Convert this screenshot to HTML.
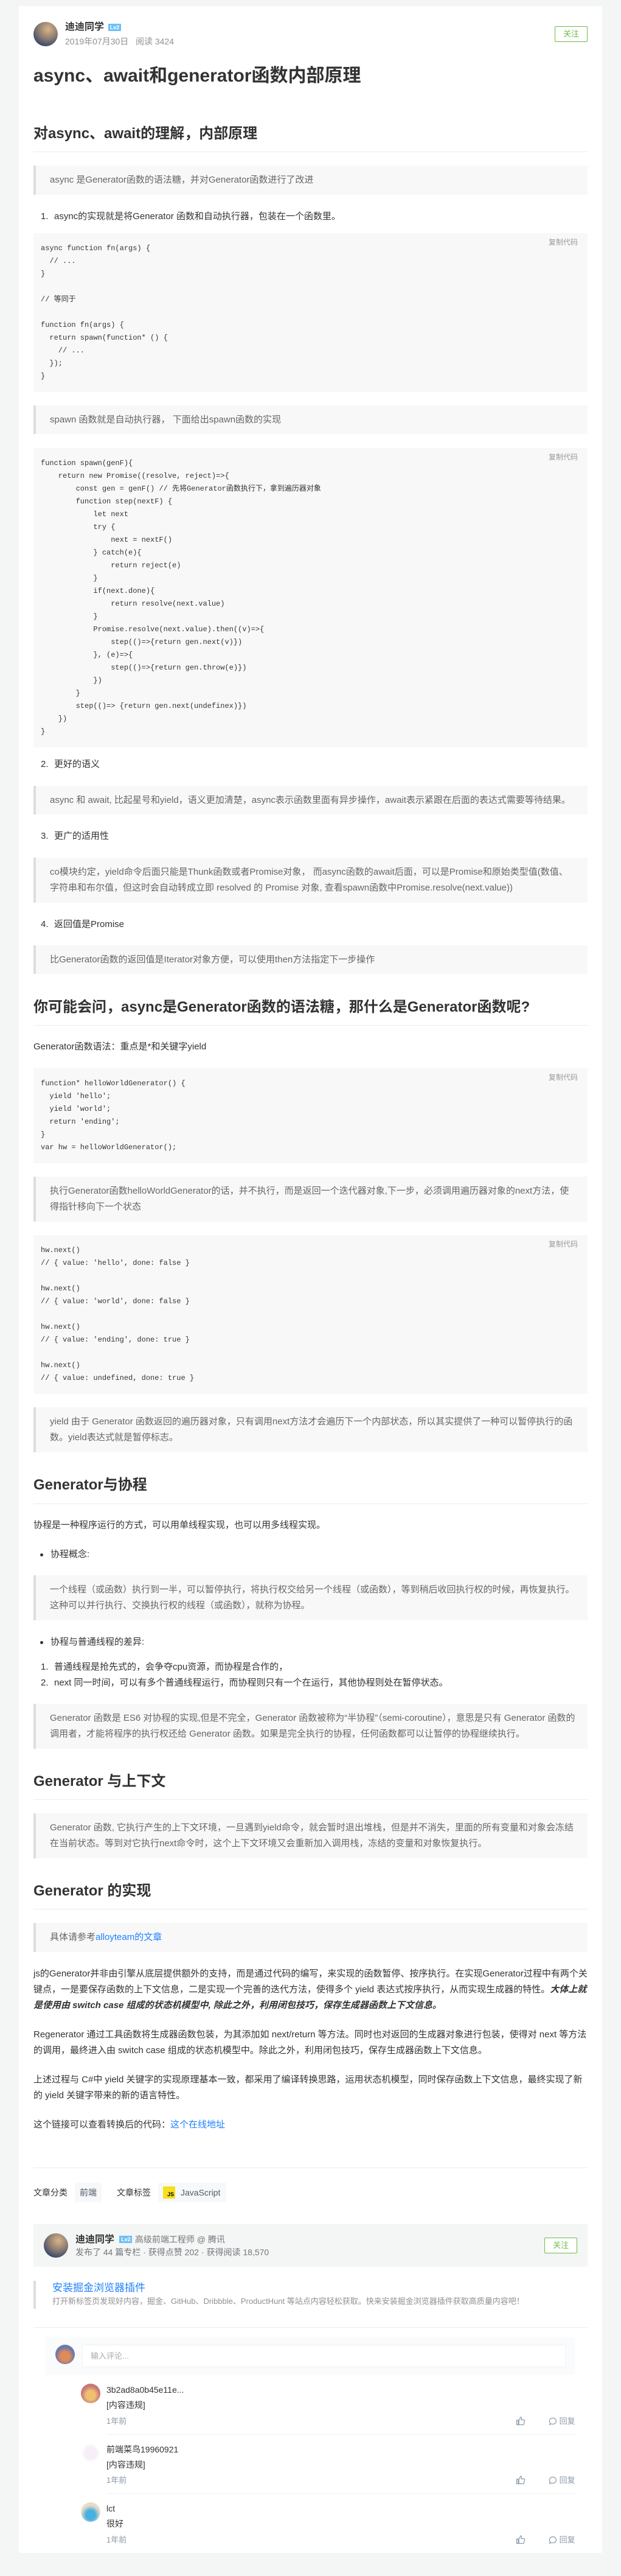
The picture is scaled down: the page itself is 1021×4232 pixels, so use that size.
<!DOCTYPE html>
<html><head><meta charset="utf-8"><style>
*{margin:0;padding:0;box-sizing:border-box}
body{width:1021px;height:4232px;background:#f4f5f5;position:relative;font-family:"Liberation Sans","Noto Sans CJK SC",sans-serif;color:#333;overflow:hidden}
.card{position:absolute;left:31px;top:10px;width:959px;height:4184px;background:#fff;border-radius:2px}
.a{position:absolute;left:55px;width:911px}
.p{font-size:15px;line-height:26px;color:#333}
.bq{background:#f8f8f8;border-left:4px solid #ddd;padding:11px 20px 11px 23px;font-size:15px;line-height:26px;color:#666}
.code{background:#f8f8f8;padding:15px 12px;font-family:"Liberation Mono","Noto Sans CJK SC",monospace;font-size:12px;line-height:21px;color:#333;white-space:pre}
.copy{position:absolute;right:16px;top:5px;font-size:12px;color:#999;font-family:"Liberation Sans","Noto Sans CJK SC",sans-serif}
.h2{font-size:24px;font-weight:bold;line-height:34px;color:#333}
.hr{height:1px;background:#ececec}
.li{font-size:15px;line-height:26px;color:#333}
.li span{display:inline-block;width:22px;margin-left:12px}
.bul{font-size:15px;line-height:26px}
.bul:before{content:"";position:absolute;left:11px;top:11px;width:5px;height:5px;border-radius:50%;background:#333}
.bul{padding-left:28px}
a{color:#1e80ff;text-decoration:none}
.tag{position:absolute;background:#f7f8fa;border-radius:2px;font-size:15px;line-height:32px;color:#4e5969;height:32px}
.cm .av{position:absolute;left:133px;width:32px;height:32px;border-radius:50%}
.nm{position:absolute;left:175px;font-size:14px;color:#333;line-height:20px}
.tm{position:absolute;left:175px;font-size:13px;color:#8a9aa9;line-height:20px}
.act{position:absolute;font-size:13px;color:#8a9aa9;line-height:20px}
.act svg{vertical-align:-3px}
</style></head><body>
<div class="card"></div>

<div style="position:absolute;left:55px;top:36px;width:40px;height:40px;border-radius:50%;background:radial-gradient(circle at 60% 30%,#d9b58a,#8a7a70 45%,#3c4d6b 75%,#5a3a4a)"></div>
<div style="position:absolute;left:107px;top:35px;font-size:16px;font-weight:bold;color:#333;line-height:20px">迪迪同学</div>
<div style="position:absolute;left:178px;top:39px;width:21px;height:12px;background:#6cc0f5;color:#fff;font-size:9px;font-weight:bold;line-height:12px;text-align:center;border-radius:1px">Lv2</div>
<div style="position:absolute;left:107px;top:59px;font-size:14px;color:#909090;line-height:18px">2019年07月30日 &nbsp; 阅读 3424</div>
<div style="position:absolute;left:912px;top:43px;width:54px;height:26px;border:1px solid #6cbd45;color:#6cbd45;font-size:13px;line-height:24px;text-align:center;border-radius:2px">关注</div>

<div class="a" style="top:106px;font-size:30px;font-weight:bold;line-height:38px;color:#333">async、await和generator函数内部原理</div>

<div class="a h2" style="top:203px">对async、await的理解，内部原理</div>
<div class="a hr" style="top:249px"></div>
<div class="a bq" style="top:272px;height:48px">async 是Generator函数的语法糖，并对Generator函数进行了改进</div>
<div class="a li" style="top:343px"><span>1.</span>async的实现就是将Generator 函数和自动执行器，包装在一个函数里。</div>
<div class="a code" style="top:383px;height:261px"><div class="copy">复制代码</div>async function fn(args) {
  // ...
}

// 等同于

function fn(args) {
  return spawn(function* () {
    // ...
  });
}</div>
<div class="a bq" style="top:666px;height:47px">spawn 函数就是自动执行器， 下面给出spawn函数的实现</div>
<div class="a code" style="top:736px;height:492px"><div class="copy">复制代码</div>function spawn(genF){
    return new Promise((resolve, reject)=>{
        const gen = genF() // 先将Generator函数执行下，拿到遍历器对象
        function step(nextF) {
            let next
            try {
                next = nextF()
            } catch(e){
                return reject(e)
            }
            if(next.done){
                return resolve(next.value)
            }
            Promise.resolve(next.value).then((v)=>{
                step(()=>{return gen.next(v)})
            }, (e)=>{
                step(()=>{return gen.throw(e)})
            })
        }
        step(()=> {return gen.next(undefinex)})
    })
}</div>
<div class="a li" style="top:1243px"><span>2.</span>更好的语义</div>
<div class="a bq" style="top:1291px;height:47px">async 和 await, 比起星号和yield，语义更加清楚，async表示函数里面有异步操作，await表示紧跟在后面的表达式需要等待结果。</div>
<div class="a li" style="top:1361px"><span>3.</span>更广的适用性</div>
<div class="a bq" style="top:1409px;height:74px">co模块约定，yield命令后面只能是Thunk函数或者Promise对象， 而async函数的await后面，可以是Promise和原始类型值(数值、字符串和布尔值，但这时会自动转成立即 resolved 的 Promise 对象, 查看spawn函数中Promise.resolve(next.value))</div>
<div class="a li" style="top:1506px"><span>4.</span>返回值是Promise</div>
<div class="a bq" style="top:1553px;height:47px">比Generator函数的返回值是Iterator对象方便，可以使用then方法指定下一步操作</div>

<div class="a h2" style="top:1638px">你可能会问，async是Generator函数的语法糖，那什么是Generator函数呢?</div>
<div class="a hr" style="top:1684px"></div>
<div class="a p" style="top:1707px">Generator函数语法：重点是*和关键字yield</div>
<div class="a code" style="top:1755px;height:156px"><div class="copy">复制代码</div>function* helloWorldGenerator() {
  yield 'hello';
  yield 'world';
  return 'ending';
}
var hw = helloWorldGenerator();</div>
<div class="a bq" style="top:1933px;height:74px">执行Generator函数helloWorldGenerator的话，并不执行，而是返回一个迭代器对象,下一步，必须调用遍历器对象的next方法，使得指针移向下一个状态</div>
<div class="a code" style="top:2029px;height:261px"><div class="copy">复制代码</div>hw.next()
// { value: 'hello', done: false }

hw.next()
// { value: 'world', done: false }

hw.next()
// { value: 'ending', done: true }

hw.next()
// { value: undefined, done: true }</div>
<div class="a bq" style="top:2312px;height:74px">yield 由于 Generator 函数返回的遍历器对象，只有调用next方法才会遍历下一个内部状态，所以其实提供了一种可以暂停执行的函数。yield表达式就是暂停标志。</div>

<div class="a h2" style="top:2423px">Generator与协程</div>
<div class="a hr" style="top:2470px"></div>
<div class="a p" style="top:2493px">协程是一种程序运行的方式，可以用单线程实现，也可以用多线程实现。</div>
<div class="a bul" style="top:2541px">协程概念:</div>
<div class="a bq" style="top:2588px;height:74px">一个线程（或函数）执行到一半，可以暂停执行，将执行权交给另一个线程（或函数），等到稍后收回执行权的时候，再恢复执行。这种可以并行执行、交换执行权的线程（或函数），就称为协程。</div>
<div class="a bul" style="top:2685px">协程与普通线程的差异:</div>
<div class="a li" style="top:2726px"><span>1.</span>普通线程是抢先式的，会争夺cpu资源，而协程是合作的，</div>
<div class="a li" style="top:2752px"><span>2.</span>next 同一时间，可以有多个普通线程运行，而协程则只有一个在运行，其他协程则处在暂停状态。</div>
<div class="a bq" style="top:2799px;height:74px">Generator 函数是 ES6 对协程的实现,但是不完全，Generator 函数被称为“半协程”（semi-coroutine），意思是只有 Generator 函数的调用者，才能将程序的执行权还给 Generator 函数。如果是完全执行的协程，任何函数都可以让暂停的协程继续执行。</div>

<div class="a h2" style="top:2910px">Generator 与上下文</div>
<div class="a hr" style="top:2956px"></div>
<div class="a bq" style="top:2979px;height:74px">Generator 函数, 它执行产生的上下文环境，一旦遇到yield命令，就会暂时退出堆栈，但是并不消失，里面的所有变量和对象会冻结在当前状态。等到对它执行next命令时，这个上下文环境又会重新加入调用栈，冻结的变量和对象恢复执行。</div>

<div class="a h2" style="top:3090px">Generator 的实现</div>
<div class="a hr" style="top:3136px"></div>
<div class="a bq" style="top:3159px;height:48px">具体请参考<a>alloyteam的文章</a></div>
<div class="a p" style="top:3230px">js的Generator并非由引擎从底层提供额外的支持，而是通过代码的编写，来实现的函数暂停、按序执行。在实现Generator过程中有两个关键点，一是要保存函数的上下文信息，二是实现一个完善的迭代方法，使得多个 yield 表达式按序执行，从而实现生成器的特性。<b><i>大体上就是使用由 switch case 组成的状态机模型中, 除此之外，利用闭包技巧，保存生成器函数上下文信息。</i></b></div>
<div class="a p" style="top:3330px">Regenerator 通过工具函数将生成器函数包装，为其添加如 next/return 等方法。同时也对返回的生成器对象进行包装，使得对 next 等方法的调用，最终进入由 switch case 组成的状态机模型中。除此之外，利用闭包技巧，保存生成器函数上下文信息。</div>
<div class="a p" style="top:3404px">上述过程与 C#中 yield 关键字的实现原理基本一致，都采用了编译转换思路，运用状态机模型，同时保存函数上下文信息，最终实现了新的 yield 关键字带来的新的语言特性。</div>
<div class="a p" style="top:3478px">这个链接可以查看转换后的代码：<a>这个在线地址</a></div>

<div class="a hr" style="top:3561px"></div>
<div style="position:absolute;left:55px;top:3592px;font-size:14px;line-height:20px;color:#333">文章分类</div>
<div class="tag" style="left:123px;top:3586px;width:44px;text-align:center;font-size:14px">前端</div>
<div style="position:absolute;left:192px;top:3592px;font-size:14px;line-height:20px;color:#333">文章标签</div>
<div class="tag" style="left:260px;top:3586px;width:112px;font-size:14px"><span style="position:absolute;left:8px;top:6px;width:20px;height:20px;background:#f7df1e;color:#000;font-size:9px;font-weight:bold;line-height:26px;text-align:right;padding-right:2px">JS</span><span style="position:absolute;left:37px">JavaScript</span></div>

<div class="a" style="top:3654px;height:70px;background:#f4f5f5"></div>
<div style="position:absolute;left:72px;top:3669px;width:40px;height:40px;border-radius:50%;background:radial-gradient(circle at 60% 30%,#d9b58a,#8a7a70 45%,#3c4d6b 75%,#5a3a4a)"></div>
<div style="position:absolute;left:124px;top:3668px;font-size:16px;font-weight:bold;line-height:22px;color:#333">迪迪同学 <span style="display:inline-block;width:21px;height:12px;background:#6cc0f5;color:#fff;font-size:9px;line-height:12px;text-align:center;vertical-align:2px;margin-left:4px">Lv2</span> <span style="font-size:14px;font-weight:normal;color:#72777b">高级前端工程师 @ 腾讯</span></div>
<div style="position:absolute;left:124px;top:3691px;font-size:14px;line-height:18px;color:#72777b">发布了 44 篇专栏 · 获得点赞 202 · 获得阅读 18,570</div>
<div style="position:absolute;left:895px;top:3676px;width:54px;height:26px;border:1px solid #6cbd45;color:#6cbd45;font-size:13px;line-height:24px;text-align:center;border-radius:2px;background:#fff">关注</div>

<div class="a" style="top:3747px;height:46px;border-left:4px solid #ddd;padding-left:27px">
<div style="font-size:17px;line-height:24px;color:#1e80ff">安装掘金浏览器插件</div>
<div style="font-size:13px;line-height:20px;color:#909090">打开新标签页发现好内容，掘金、GitHub、Dribbble、ProductHunt 等站点内容轻松获取。快来安装掘金浏览器插件获取高质量内容吧！</div>
</div>
<div class="a hr" style="top:3823px"></div>

<div style="position:absolute;left:75px;top:3840px;width:871px;height:61px;background:#fafbfc"></div>
<div style="position:absolute;left:91px;top:3852px;width:32px;height:32px;border-radius:50%;background:radial-gradient(circle at 50% 60%,#e08a5a 30%,#6d7aa8 60%)"></div>
<div style="position:absolute;left:135px;top:3852px;width:795px;height:37px;background:#fff;border:1px solid #f1f1f1;border-radius:3px;padding-left:13px;font-size:13px;line-height:35px;color:#aaa">输入评论...</div>

<div class="cm">
<div class="av" style="top:3916px;background:radial-gradient(circle at 50% 60%,#f0c070 30%,#c87878 60%)"></div>
<div class="nm" style="top:3916px">3b2ad8a0b45e11e...</div>
<div class="nm" style="top:3941px">[内容违规]</div>
<div class="tm" style="top:3968px">1年前</div>
<div class="act" style="top:3968px;left:848px"><svg width="16" height="16" viewBox="0 0 16 16" fill="none" stroke="#8a9aa9" stroke-width="1.2"><path d="M1.5 7h2.5v7.5h-2.5z"/><path d="M5 7.5l3-5.5c1.2 0 1.7.8 1.4 2L9 6.5h4.5c.8 0 1.3.7 1.1 1.5l-1.3 5.5c-.2.6-.7 1-1.3 1H5z"/></svg></div>
<div class="act" style="top:3968px;left:902px"><svg width="14" height="14" viewBox="0 0 14 14" fill="none" stroke="#8a9aa9" stroke-width="1.2"><path d="M7 1.5a5.5 5 0 1 1-2.5 9.5L1.8 12.3l.9-2.6A5.5 5 0 0 1 7 1.5z"/></svg> 回复</div>
<div style="position:absolute;left:175px;top:3999px;width:771px;height:1px;background:#f1f1f1"></div>

<div class="av" style="top:4014px;background:radial-gradient(circle,#f6eef8 40%,#fff 70%)"></div>
<div class="nm" style="top:4014px">前端菜鸟19960921</div>
<div class="nm" style="top:4039px">[内容违规]</div>
<div class="tm" style="top:4065px">1年前</div>
<div class="act" style="top:4065px;left:848px"><svg width="16" height="16" viewBox="0 0 16 16" fill="none" stroke="#8a9aa9" stroke-width="1.2"><path d="M1.5 7h2.5v7.5h-2.5z"/><path d="M5 7.5l3-5.5c1.2 0 1.7.8 1.4 2L9 6.5h4.5c.8 0 1.3.7 1.1 1.5l-1.3 5.5c-.2.6-.7 1-1.3 1H5z"/></svg></div>
<div class="act" style="top:4065px;left:902px"><svg width="14" height="14" viewBox="0 0 14 14" fill="none" stroke="#8a9aa9" stroke-width="1.2"><path d="M7 1.5a5.5 5 0 1 1-2.5 9.5L1.8 12.3l.9-2.6A5.5 5 0 0 1 7 1.5z"/></svg> 回复</div>
<div style="position:absolute;left:175px;top:4096px;width:771px;height:1px;background:#f1f1f1"></div>

<div class="av" style="top:4111px;background:radial-gradient(circle at 50% 65%,#4ab0e0 30%,#e8dcc8 60%)"></div>
<div class="nm" style="top:4111px">lct</div>
<div class="nm" style="top:4136px">很好</div>
<div class="tm" style="top:4163px">1年前</div>
<div class="act" style="top:4163px;left:848px"><svg width="16" height="16" viewBox="0 0 16 16" fill="none" stroke="#8a9aa9" stroke-width="1.2"><path d="M1.5 7h2.5v7.5h-2.5z"/><path d="M5 7.5l3-5.5c1.2 0 1.7.8 1.4 2L9 6.5h4.5c.8 0 1.3.7 1.1 1.5l-1.3 5.5c-.2.6-.7 1-1.3 1H5z"/></svg></div>
<div class="act" style="top:4163px;left:902px"><svg width="14" height="14" viewBox="0 0 14 14" fill="none" stroke="#8a9aa9" stroke-width="1.2"><path d="M7 1.5a5.5 5 0 1 1-2.5 9.5L1.8 12.3l.9-2.6A5.5 5 0 0 1 7 1.5z"/></svg> 回复</div>
</div>
</body></html>
